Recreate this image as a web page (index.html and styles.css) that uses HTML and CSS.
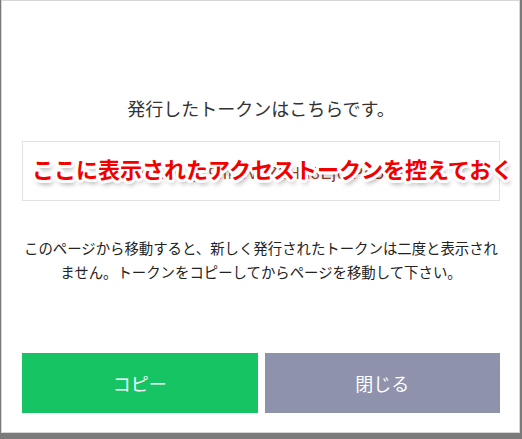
FILE: index.html
```html
<!DOCTYPE html>
<html lang="ja">
<head>
<meta charset="utf-8">
<title>トークン</title>
<link rel="stylesheet" href="styles.css">
</head>
<body>
<div class="modal">
  <p class="title">発行したトークンはこちらです。</p>
  <div class="token-box">
    <span class="token">kR7xTIL2CqA9mWv3ZbHn8Ej0fPsU4yLd</span>
    <span class="note">ここに表示されたアクセストークンを控えておく</span>
  </div>
  <p class="desc">このページから移動すると、新しく発行されたトークンは二度と表示され<br>ません。トークンをコピーしてからページを移動して下さい。</p>
  <div class="buttons">
    <button class="btn btn-copy">コピー</button>
    <button class="btn btn-close">閉じる</button>
  </div>
</div>
</body>
</html>
```

FILE: styles.css
```css
html, body {
  margin: 0;
  padding: 0;
}
body {
  background: #7a7a7a;
  width: 522px;
  height: 439px;
  overflow: hidden;
  font-family: "Noto Sans CJK JP", "Noto Sans", sans-serif;
}
.modal {
  box-sizing: border-box;
  margin-left: 1px;
  width: 519px;
  height: 433px;
  background: #fff;
  border: 1px solid #d6d6d6;
  padding: 95px 19px 0 20px;
  display: flex;
  flex-direction: column;
}
.title {
  margin: 0;
  font-size: 18px;
  line-height: 24px;
  color: #333;
  text-align: center;
}
.token-box {
  position: relative;
  margin-top: 21px;
  box-sizing: border-box;
  height: 60px;
  border: 1px solid #e2e2e2;
  display: flex;
  align-items: center;
  justify-content: center;
}
.token {
  font-family: "Liberation Sans", sans-serif;
  font-size: 16px;
  color: #9a3a22;
  letter-spacing: 1px;
  padding-top: 6px;
}
.note {
  position: absolute;
  left: 9px;
  top: 10px;
  font-size: 22px;
  font-weight: bold;
  line-height: 32px;
  color: #f20000;
  white-space: nowrap;
  text-shadow:
    2px 0 0 #fff, -2px 0 0 #fff, 0 2px 0 #fff, 0 -2px 0 #fff,
    2px 2px 0 #fff, -2px -2px 0 #fff, 2px -2px 0 #fff, -2px 2px 0 #fff,
    3px 1px 0 #fff, -3px 1px 0 #fff, 1px 3px 0 #fff, 1px -3px 0 #fff,
    3px -1px 0 #fff, -3px -1px 0 #fff, -1px 3px 0 #fff, -1px -3px 0 #fff,
    2px 4px 5px rgba(0,0,0,0.45);
}
.desc {
  margin: 35px 0 0;
  font-size: 14.4px;
  line-height: 24px;
  color: #222;
  text-align: center;
}
.buttons {
  margin-top: 69px;
  display: flex;
  gap: 7px;
}
.btn {
  flex: 1;
  height: 60px;
  border: 0;
  margin: 0;
  padding: 0;
  font-family: "Noto Sans CJK JP", "Noto Sans", sans-serif;
  font-size: 18px;
  color: #fff;
  cursor: pointer;
}
.btn-copy {
  background: #17c463;
}
.btn-close {
  background: #8e92ab;
}
```
